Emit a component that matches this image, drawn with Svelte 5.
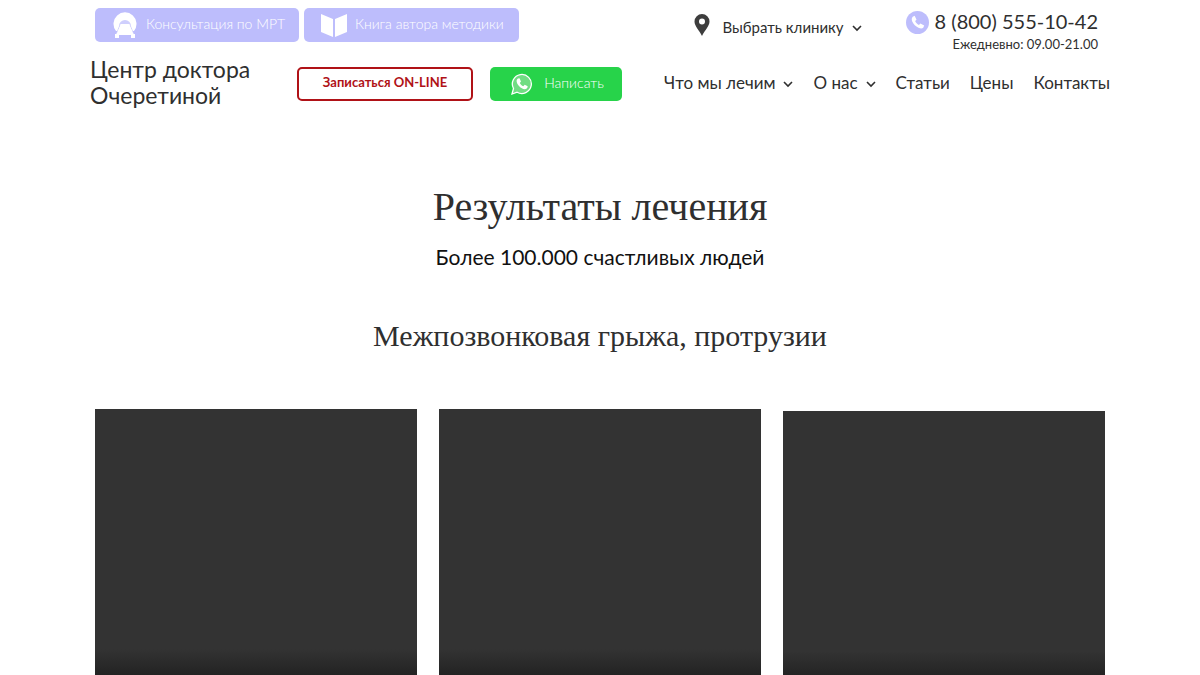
<script lang="ts">
  const menu = [
    { title: 'Что мы лечим', href: '#treatment', dropdown: true },
    { title: 'О нас', href: '#about', dropdown: true },
    { title: 'Статьи', href: '#articles', dropdown: false },
    { title: 'Цены', href: '#prices', dropdown: false },
    { title: 'Контакты', href: '#contacts', dropdown: false }
  ];

  const videos = [1, 2, 3];
</script>

{#snippet chevron()}
  <svg class="chevron" viewBox="0 0 10 8" aria-hidden="true">
    <path d="M1 2l4 4 4-4" fill="none" stroke="currentColor" stroke-width="1.6" />
  </svg>
{/snippet}

<header class="header">
  <div class="top-row">
    <div class="promo">
      <a class="promo-btn mrt" href="#mrt">
        <svg class="promo-icon" viewBox="0 0 26 26" aria-hidden="true">
          <path d="M4 19A11.500 11.500 0 1 1 22 19z" fill="#fff" />
          <path d="M7 14a6 6 0 0 1 12 0l-2-2H9z" fill="#cfcffd" />
          <path d="M8 13L4 23M18 13l4 10" stroke="#cfcffd" stroke-width="1" />
          <path d="M9 12h8l5 11H4z" fill="#fff" />
          <path d="M3 22h4v4H3zM19 22h4v4h-4z" fill="#fff" />
        </svg>
        <span class="btn-text">Консультация по МРТ</span>
      </a>
      <a class="promo-btn book" href="#book">
        <svg class="promo-icon" viewBox="0 0 26 26" aria-hidden="true">
          <path d="M0 2l12 5v18L0 20zM26 2L14 7v18l12-5z" fill="#fff" />
        </svg>
        <span class="btn-text">Книга автора методики</span>
      </a>
    </div>

    <button class="clinic" type="button">
      <svg class="pin" viewBox="0 0 16 22" aria-hidden="true">
        <path fill-rule="evenodd" d="M8 0a7.500 7.500 0 0 0-7.500 7.500C.5 12 5 16 8 22c3-6 7.500-10 7.500-14.500A7.500 7.500 0 0 0 8 0zm0 4.500a3 3 0 1 1 0 6 3 3 0 0 1 0-6z" fill="#3d3d3d" />
      </svg>
      <span class="clinic-text">Выбрать клинику {@render chevron()}</span>
    </button>

    <div class="phone">
      <a class="phone-link" href="tel:88005551042">
        <svg class="phone-icon" viewBox="0 0 24 24" aria-hidden="true">
          <circle cx="12" cy="12" r="12" fill="#bdbdfc" />
          <path d="M7 6l2-1 2 4-1.500 1.500c.8 1.900 2.100 3.200 4 4L15 13l4 2-1 2.500c-1 1-3 1-5 0-3-1.500-5-3.500-6.500-6.500C5.600 9 6 7 7 6z" fill="#fff" />
        </svg>
        <span class="number">8 (800) 555-10-42</span>
      </a>
      <span class="hours">Ежедневно: 09.00-21.00</span>
    </div>
  </div>

  <div class="main-row">
    <a class="logo" href="#home">Центр доктора<br />Очеретиной</a>
    <button class="online" type="button"><span class="btn-text">Записаться ON-LINE</span></button>
    <a class="whatsapp" href="#whatsapp">
      <svg class="whatsapp-icon" viewBox="0 0 22 22" aria-hidden="true">
        <path d="M1 21l1.500-5.500a9.500 9.500 0 1 1 3.600 3.700z" fill="#71dd83" stroke="#fff" stroke-width="1.300" />
        <path d="M7 5.500l1.500-.2L10 8.500 8.800 10c.8 1.600 1.900 2.600 3.500 3.300l1.400-1.500 3 1.500c0 2-1.500 3-3 3C10 16 5.600 11.500 5.600 8c0-1 .6-2 1.400-2.500z" fill="#fff" />
      </svg>
      <span class="btn-text">Написать</span>
    </a>
    <nav class="menu">
      {#each menu as item}
        <a class="menu-link" href={item.href}>
          {item.title}
          {#if item.dropdown}
            {@render chevron()}
          {/if}
        </a>
      {/each}
    </nav>
  </div>
</header>

<main class="results">
  <h1 class="title">Результаты лечения</h1>
  <p class="subtitle">Более 100.000 счастливых людей</p>
  <h2 class="section-title">Межпозвонковая грыжа, протрузии</h2>
  <div class="videos">
    {#each videos as video}
      <div class="video" role="img" aria-label="Видео {video}"></div>
    {/each}
  </div>
</main>

<style>
  :global(body) {
    margin: 0;
    background: #fff;
    color: #2f2f2f;
    font-family: Lato, 'Liberation Sans', sans-serif;
  }

  a {
    color: inherit;
    text-decoration: none;
  }

  button {
    font-family: inherit;
    color: inherit;
    cursor: pointer;
  }

  .header {
    box-sizing: border-box;
    max-width: 1020px;
    margin: 0 auto;
    padding-top: 8px;
  }

  .top-row {
    display: flex;
    align-items: flex-start;
    padding: 0 12px 0 5px;
  }

  .promo {
    display: flex;
    gap: 5px;
  }

  .promo-btn {
    display: flex;
    align-items: center;
    box-sizing: border-box;
    gap: 8px;
    height: 34px;
    padding: 0 17px;
    border-radius: 5px;
    background: #bdbdfc;
    color: #fff;
    font-size: 14px;
    font-weight: 300;
    white-space: nowrap;
  }

  .btn-text {
    padding-bottom: 4px;
  }

  .mrt {
    width: 204px;
  }

  .book {
    width: 215px;
  }

  .promo-icon {
    flex: none;
    width: 26px;
    height: 26px;
  }

  .clinic {
    display: flex;
    align-items: center;
    gap: 12px;
    margin-left: auto;
    padding: 6px 0;
    border: none;
    background: none;
    font-size: 15px;
    white-space: nowrap;
  }

  .clinic-text {
    display: flex;
    align-items: center;
    gap: 8px;
    padding-top: 4px;
  }

  .pin {
    width: 16px;
    height: 22px;
  }

  .chevron {
    flex: none;
    width: 10px;
    height: 8px;
    padding-top: 2px;
  }

  .phone {
    display: flex;
    flex-direction: column;
    align-items: flex-end;
    margin-left: 44px;
    white-space: nowrap;
  }

  .phone-link {
    display: flex;
    align-items: center;
    gap: 6px;
    font-size: 20px;
    line-height: 26px;
  }

  .number {
    padding-bottom: 2px;
  }

  .phone-icon {
    width: 23px;
    height: 23px;
  }

  .hours {
    font-size: 13px;
    line-height: 16px;
  }

  .main-row {
    display: flex;
    align-items: center;
    margin-top: 4px;
  }

  .logo {
    width: 207px;
    padding-bottom: 4px;
    font-size: 23px;
    line-height: 26px;
    white-space: nowrap;
  }

  .online {
    box-sizing: border-box;
    width: 176px;
    height: 34px;
    padding: 0;
    border: 2px solid #b01217;
    border-radius: 5px;
    background: #fff;
    color: #b01217;
    font-size: 13px;
    font-weight: 700;
  }

  .online .btn-text {
    display: block;
  }

  .whatsapp {
    display: flex;
    align-items: center;
    justify-content: center;
    box-sizing: border-box;
    gap: 11px;
    width: 132px;
    height: 34px;
    margin-left: 17px;
    padding-left: 3px;
    border-radius: 5px;
    background: #27d34a;
    color: #fff;
    font-size: 14px;
    font-weight: 300;
  }

  .whatsapp-icon {
    width: 22px;
    height: 22px;
  }

  .menu {
    display: flex;
    gap: 20px;
    margin-left: auto;
    padding-bottom: 3px;
  }

  .menu-link {
    display: flex;
    align-items: center;
    gap: 8px;
    font-size: 17px;
    line-height: 24px;
    white-space: nowrap;
  }

  .results {
    max-width: 1010px;
    margin: 0 auto;
    padding-top: 71px;
    text-align: center;
  }

  .title,
  .section-title {
    margin: 0;
    font-family: 'Liberation Serif', serif;
    font-weight: 400;
  }

  .title {
    font-size: 40px;
    line-height: 48px;
  }

  .subtitle {
    margin: 12px 0 0;
    color: #111;
    font-size: 21px;
    line-height: 28px;
  }

  .section-title {
    margin-top: 47px;
    font-size: 30px;
    line-height: 36px;
  }

  .videos {
    display: grid;
    grid-template-columns: repeat(3, minmax(0, 1fr));
    align-items: start;
    gap: 22px;
    margin-top: 55px;
  }

  .video {
    aspect-ratio: 1;
    background: linear-gradient(to top, #000, #333 82px);
  }

  .video:last-child {
    margin-top: 2px;
  }

  @media (max-width: 1020px) {
    .top-row,
    .main-row,
    .promo,
    .menu {
      flex-wrap: wrap;
      gap: 10px;
    }

    .results {
      padding: 48px 12px 0;
    }
  }
</style>
